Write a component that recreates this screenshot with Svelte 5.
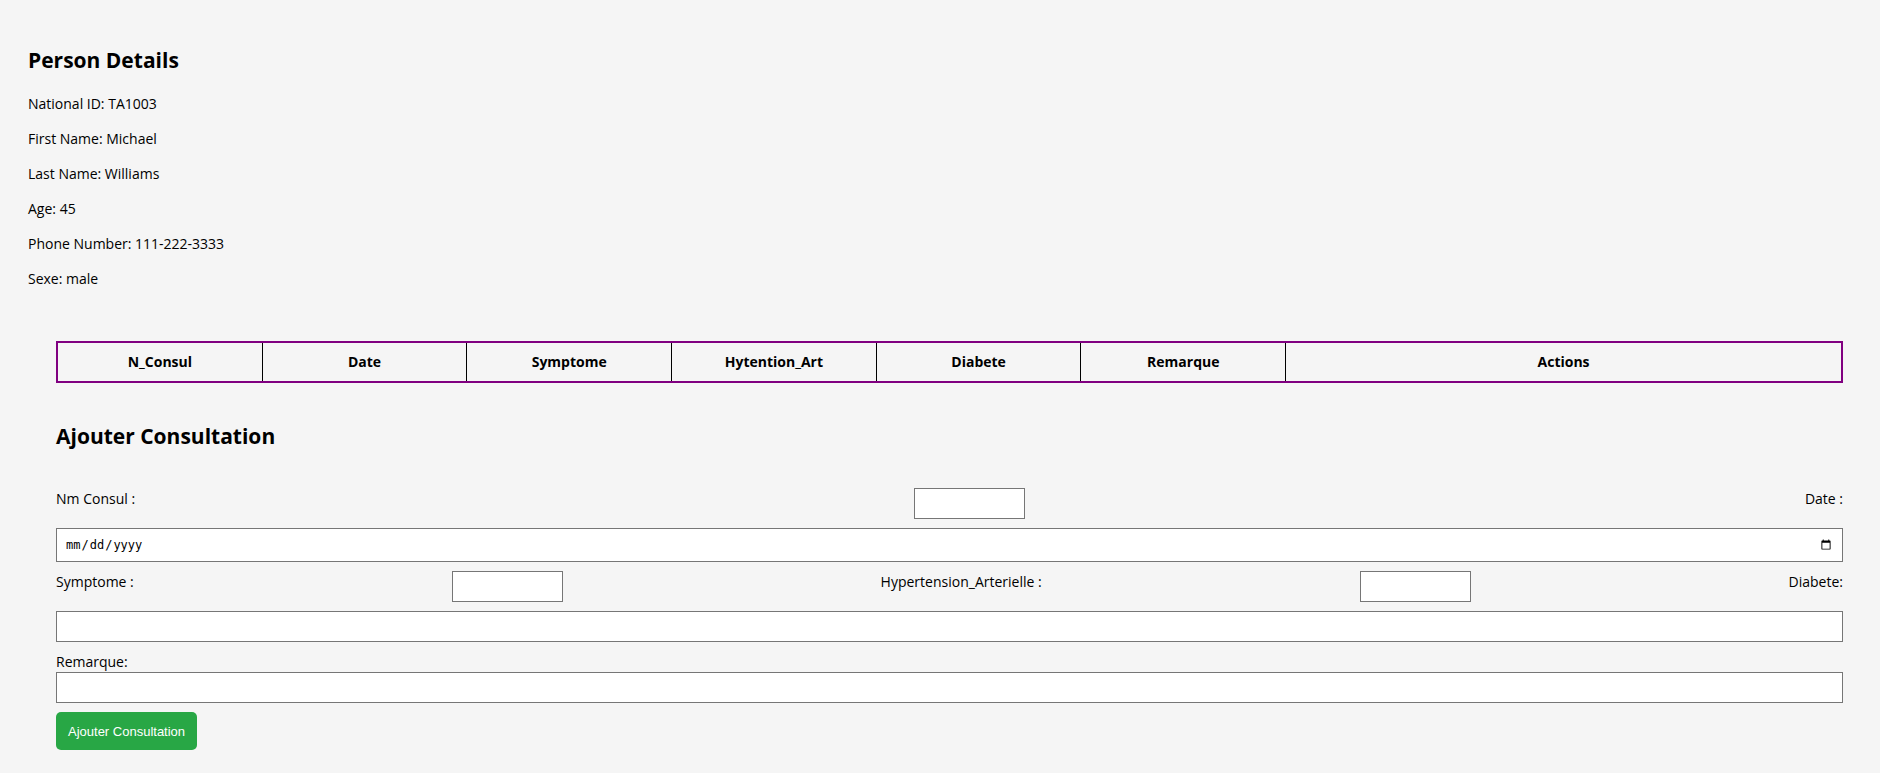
<script>
  const person = [
    ['National ID', 'TA1003'],
    ['First Name', 'Michael'],
    ['Last Name', 'Williams'],
    ['Age', '45'],
    ['Phone Number', '111-222-3333'],
    ['Sexe', 'male'],
  ];
  const columns = ['N_Consul', 'Date', 'Symptome', 'Hytention_Art', 'Diabete', 'Remarque'];
</script>

<main>
  <section class="person">
    <h2>Person Details</h2>
    {#each person as [name, value]}
      <p>{name}: {value}</p>
    {/each}
  </section>

  <section class="consultations">
    <table>
      <thead>
        <tr>
          {#each columns as column}
            <th class="field" scope="col">{column}</th>
          {/each}
          <th scope="col">Actions</th>
        </tr>
      </thead>
    </table>

    <h2>Ajouter Consultation</h2>

    <form onsubmit={(event) => event.preventDefault()}>
      <div class="row">
        <label for="number">Nm Consul :</label>
        <input class="short" id="number" type="text" />
        <label for="date">Date :</label>
      </div>
      <input class="date" id="date" type="date" />
      <div class="row">
        <label for="symptom">Symptome :</label>
        <input class="short" id="symptom" type="text" />
        <label for="hypertension">Hypertension_Arterielle :</label>
        <input class="short" id="hypertension" type="text" />
        <label for="diabetes">Diabete:</label>
      </div>
      <input id="diabetes" type="text" />
      <div class="stack">
        <label for="remark">Remarque:</label>
        <input id="remark" type="text" />
      </div>
      <button type="submit">Ajouter Consultation</button>
    </form>
  </section>
</main>

<style>
  :global(body) {
    background: #f5f5f5;
  }

  main {
    padding: 44px 28px 23px;
    color: #000;
    font-family: "Segoe UI", "Open Sans", sans-serif;
    font-size: 14px;
    line-height: 21px;
  }

  h2 {
    margin: 0;
    font-size: 21px;
    line-height: 32px;
    font-weight: 700;
  }

  p {
    margin: 0;
  }

  .person {
    display: flex;
    flex-direction: column;
    gap: 14px;
  }

  .person h2 {
    margin-bottom: 3px;
  }

  .consultations {
    padding: 52px 9px 0 28px;
  }

  table {
    width: 100%;
    margin-bottom: 37px;
    table-layout: fixed;
    border-collapse: separate;
    border-spacing: 0;
    border: 2px solid #800080;
  }

  th {
    padding: 8px;
    line-height: 22px;
    font-weight: 700;
    text-align: center;
  }

  th.field {
    width: 11.48%;
    box-sizing: border-box;
    border-right: 1px solid #000;
  }

  form {
    display: flex;
    flex-direction: column;
    align-items: stretch;
    gap: 9px;
    margin-top: 36px;
  }

  .row {
    display: flex;
    justify-content: space-between;
    align-items: flex-start;
  }

  .stack {
    display: flex;
    flex-direction: column;
  }

  input {
    box-sizing: border-box;
    width: 100%;
    height: 31px;
    margin: 0;
    padding: 0 8px;
    border: 1px solid #767676;
    border-radius: 0;
    background: #fff;
    color: #000;
  }

  .short {
    width: 111px;
  }

  .date {
    height: 34px;
    font-family: Consolas, "DejaVu Sans Mono", monospace;
    font-size: 12px;
  }

  button {
    align-self: flex-start;
    height: 38px;
    padding: 0 12px;
    border: 0;
    border-radius: 5px;
    background: #28a745;
    color: #fff;
    font-family: "Liberation Sans", Arial, sans-serif;
    font-size: 13px;
    cursor: pointer;
  }
</style>
